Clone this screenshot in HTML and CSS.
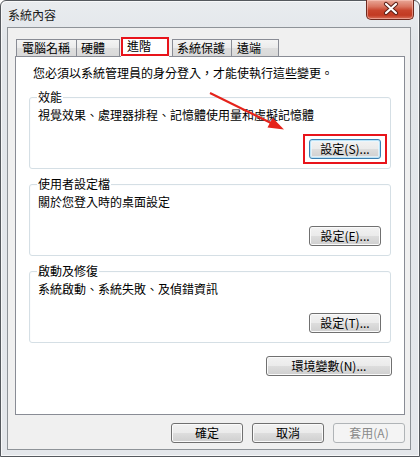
FILE: index.html
```html
<!DOCTYPE html>
<html lang="zh-Hant">
<head>
<meta charset="utf-8">
<link rel="stylesheet" href="styles.css">
</head>
<body>
<div class="window">
  <div class="titlebar">
    <span class="title">系統內容</span>
    <div class="close">
      <svg width="48" height="20" viewBox="0 0 48 20">
        <path d="M19 5 L29 14 M29 5 L19 14" stroke="#5b1f16" stroke-width="4.2" stroke-linecap="round" fill="none"/>
        <path d="M19 5 L29 14 M29 5 L19 14" stroke="#ffffff" stroke-width="2.2" stroke-linecap="round" fill="none"/>
      </svg>
    </div>
  </div>
  <div class="client">
    <div class="tabs">
      <div class="tab t1">電腦名稱</div>
      <div class="tab t2">硬體</div>
      <div class="tab sel">進階</div>
      <div class="tab t4">系統保護</div>
      <div class="tab t5">遠端</div>
    </div>
    <div class="panel">
      <p class="note">您必須以系統管理員的身分登入，才能使執行這些變更。</p>
      <fieldset class="group">
        <legend class="legend">效能</legend>
        <p class="desc">視覺效果、處理器排程、記憶體使用量和虛擬記憶體</p>
        <div class="btnrow"><span class="hl"><button class="btn focus">設定(S)...</button></span></div>
      </fieldset>
      <fieldset class="group">
        <legend class="legend">使用者設定檔</legend>
        <p class="desc">關於您登入時的桌面設定</p>
        <div class="btnrow"><button class="btn">設定(E)...</button></div>
      </fieldset>
      <fieldset class="group">
        <legend class="legend">啟動及修復</legend>
        <p class="desc">系統啟動、系統失敗、及偵錯資訊</p>
        <div class="btnrow"><button class="btn">設定(T)...</button></div>
      </fieldset>
      <div class="envrow"><button class="btn wide">環境變數(N)...</button></div>
    </div>
    <div class="actions">
      <button class="btn">確定</button>
      <button class="btn">取消</button>
      <button class="btn disabled">套用(A)</button>
    </div>
  </div>
  <svg class="arrow" width="420" height="457" viewBox="0 0 420 457">
    <line x1="210" y1="93" x2="274" y2="124.5" stroke="#e5231b" stroke-width="2"/>
    <polygon points="284,129.5 267.5,127.5 272.5,117.8" fill="#e5231b"/>
  </svg>
</div>
</body>
</html>
```

FILE: styles.css
```css
html, body {
  margin: 0;
  padding: 0;
}
body {
  width: 420px;
  height: 457px;
  overflow: hidden;
  background: #ffffff;
  font-family: "Noto Sans CJK TC", "Noto Sans CJK SC", "Liberation Sans", sans-serif;
  font-size: 12px;
  color: #000;
}
.window {
  position: relative;
  width: 420px;
  height: 457px;
  box-sizing: border-box;
  border: 1px solid #55595e;
  border-radius: 6px 6px 0 0;
  background: linear-gradient(#e9ecef, #e2e6ea 40px, #e4e7eb);
  padding: 0 8px 6px 6px;
  display: flex;
  flex-direction: column;
  box-shadow: inset 1px 1px 0 #f7f8f9, inset -1px -1px 0 #f7f8f9;
}
.titlebar {
  display: flex;
  align-items: flex-start;
  height: 27px;
  margin-top: -1px;
  flex: none;
}
.title {
  margin-top: 8px;
  padding-left: 1px;
  line-height: 14px;
  color: #1a1a1a;
}
.close {
  margin-left: auto;
  margin-right: -3px;
  width: 48px;
  height: 20px;
  box-sizing: border-box;
  border: 1px solid #6e2a1f;
  border-top: none;
  border-radius: 0 0 5px 5px;
  background: linear-gradient(#e9a898 0%, #d9745f 35%, #c8442c 55%, #c23a22 80%, #d8705a 100%);
  box-shadow: inset 0 0 0 1px rgba(255, 210, 200, 0.5);
}
.close svg {
  display: block;
  margin-top: -1px;
}
.client {
  flex: 1;
  box-sizing: border-box;
  border: 1px solid #8e9398;
  background: #f0f0f0;
  padding: 0 5px 0 7px;
  display: flex;
  flex-direction: column;
}
.tabs {
  display: flex;
  align-items: flex-end;
  height: 19px;
  margin-top: 9px;
  flex: none;
}
.tab {
  box-sizing: border-box;
  height: 17px;
  line-height: 14px;
  padding: 1px 0 0 4px;
  border: 1px solid #898c95;
  border-bottom: none;
  background: linear-gradient(#f4f4f4, #ebebeb 50%, #dedede 51%, #d9d9d9);
  white-space: nowrap;
}
.t1 { width: 61px; margin-left: 1px; padding-left: 5px; }
.t2 { width: 43px; border-left: none; padding-left: 4px; }
.sel {
  position: relative;
  z-index: 1;
  width: 48px;
  height: 19px;
  margin-left: 1px;
  padding: 0 0 0 4px;
  border: 2px solid #e8141b;
  background: #ffffff;
  box-shadow: 0 1px 0 #ffffff;
}
.t4 { width: 60px; margin-left: 3px; }
.t5 { width: 47px; border-left: none; padding-left: 5px; }
.panel {
  box-sizing: border-box;
  height: 359px;
  border: 1px solid #898c95;
  background: #ffffff;
  padding: 0;
  display: flex;
  flex-direction: column;
  flex: none;
}
.note {
  margin: 9px 0 0 17px;
  line-height: 14px;
}
.group {
  margin: 10px 13px 0 13px;
  padding: 4px 9px 9px 7px;
  border: 1px solid #d5dfe5;
  border-radius: 3px;
  min-width: 0;
  box-shadow: inset 1px 1px 0 #fbfcfd;
}
.group + .group {
  margin-top: 8px;
}
.legend {
  padding: 0 1px;
  line-height: 14px;
}
.desc {
  margin: 0;
  padding-left: 1px;
  line-height: 14px;
}
.btnrow {
  display: flex;
  justify-content: flex-end;
  margin-top: 17px;
}
.hl {
  position: relative;
  display: block;
  height: 20px;
}
.hl::after {
  content: "";
  position: absolute;
  left: -6px;
  top: -5px;
  right: -6px;
  bottom: -5px;
  border: 2px solid #e8141b;
  pointer-events: none;
}
.envrow {
  display: flex;
  justify-content: flex-end;
  margin: 13px 12px 0 0;
}
.actions {
  display: flex;
  justify-content: flex-end;
  gap: 9px;
  margin-top: 8px;
}
.btn {
  display: block;
  box-sizing: border-box;
  width: 72px;
  height: 20px;
  padding: 0;
  margin: 0;
  font-family: inherit;
  font-size: 12px;
  line-height: 16px;
  color: #000;
  border: 1px solid #707070;
  border-radius: 3px;
  background: linear-gradient(#f2f2f2 0%, #ebebeb 48%, #dddddd 52%, #cfcfcf 100%);
  box-shadow: inset 0 0 0 1px #fafafa;
}
.btn.wide {
  width: 126px;
}
.btn.focus {
  border-color: #3c7fb1;
  box-shadow: inset 0 0 0 1px #b9e3f8, inset 0 0 0 2px rgba(236, 247, 253, 0.7);
}
.btn.disabled {
  color: #8a8a8a;
  border-color: #b0b4b7;
  background: #f4f4f4;
  box-shadow: none;
}
.arrow {
  position: absolute;
  left: -1px;
  top: -1px;
  pointer-events: none;
}
```
